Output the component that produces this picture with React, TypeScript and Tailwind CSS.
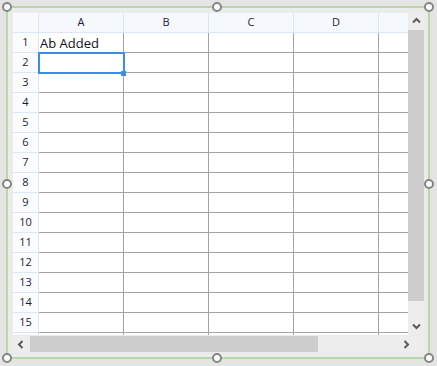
import React from 'react';

const columns = ['A', 'B', 'C', 'D', 'E'];
const rows = Array.from({ length: 16 }, (_, i) => i + 1);

const Handle: React.FC<{ className: string }> = ({ className }) => (
  <div
    className={`absolute w-[10px] h-[10px] rounded-full border-2 border-[#858585] bg-white ${className}`}
  />
);

const Chevron: React.FC<{ dir: 'up' | 'down' | 'left' | 'right' }> = ({ dir }) => {
  const paths = {
    up: 'M1 5.5 L4.5 2 L8 5.5',
    down: 'M1 2.5 L4.5 6 L8 2.5',
    left: 'M5.5 1 L2 4.5 L5.5 8',
    right: 'M2.5 1 L6 4.5 L2.5 8',
  };
  return (
    <svg width="9" height="9" viewBox="0 0 9 9">
      <path d={paths[dir]} fill="none" stroke="#5a5a5a" strokeWidth="2" />
    </svg>
  );
};

const App: React.FC = () => {
  return (
    <div
      className="w-[437px] h-[366px] bg-[#e4e4e4] p-[6px]"
      style={{ fontFamily: '"Open Sans", "Noto Sans", sans-serif' }}
    >
      <div className="relative w-[424px] h-[353px] border-2 border-[#b6d8a6] bg-[#ebebeb] pt-[5px] pl-[5px] pr-[4px]">
        <div className="flex">
          {/* grid */}
          <div className="relative w-[395px] h-[322px] overflow-hidden bg-white">
            <div className="flex h-[20px]">
              <div className="w-[26px] shrink-0 bg-[#f7f9fc] border-r border-b border-[#dde7f3]" />
              {columns.map((c) => (
                <div
                  key={c}
                  className="w-[85px] shrink-0 flex items-center justify-center text-[11px] text-[#1c1c3a] bg-[#f5f8fc] border-r border-b border-[#dde7f3]"
                >
                  {c}
                </div>
              ))}
            </div>
            {rows.map((r) => (
              <div key={r} className="flex h-[20px]">
                <div className="w-[26px] shrink-0 flex items-center justify-center text-[11px] text-[#1c1c3a] bg-[#fbfcfe] border-r border-b border-[#dde7f3]">
                  {r}
                </div>
                {columns.map((c) => (
                  <div
                    key={c}
                    className="w-[85px] shrink-0 border-r border-b border-[#a3a3a3] text-[13px] leading-[20px] pl-[1px] text-[#101020]"
                  >
                    {r === 1 && c === 'A' ? 'Ab Added' : ''}
                  </div>
                ))}
              </div>
            ))}
            {/* selection */}
            <div className="absolute left-[25px] top-[39px] w-[87px] h-[22px] border-2 border-[#3a8ee8]" />
            <div className="absolute left-[108px] top-[58px] w-[5px] h-[5px] bg-[#3a8ee8]" />
          </div>
          {/* vertical scrollbar */}
          <div className="w-[16px] h-[322px] bg-[#ededed] flex flex-col">
            <div className="h-[17px] flex items-center justify-center">
              <Chevron dir="up" />
            </div>
            <div className="h-[271px] bg-[#cdcdcd]" />
            <div className="flex-1 flex items-end justify-center pb-[4px]">
              <Chevron dir="down" />
            </div>
          </div>
        </div>
        {/* horizontal scrollbar */}
        <div className="flex items-center w-[411px] h-[16px] mt-[1px] bg-[#ededed]">
          <div className="w-[17px] flex justify-center">
            <Chevron dir="left" />
          </div>
          <div className="w-[288px] h-[16px] bg-[#cdcdcd]" />
          <div className="w-[93px] flex justify-end">
            <Chevron dir="right" />
          </div>
        </div>

        <Handle className="-left-[6px] -top-[6px]" />
        <Handle className="left-[204px] -top-[6px]" />
        <Handle className="-right-[6px] -top-[6px]" />
        <Handle className="-left-[6px] top-[171px]" />
        <Handle className="-right-[6px] top-[171px]" />
        <Handle className="-left-[6px] -bottom-[6px]" />
        <Handle className="left-[204px] -bottom-[6px]" />
        <Handle className="-right-[6px] -bottom-[6px]" />
      </div>
    </div>
  );
};

export default App;
